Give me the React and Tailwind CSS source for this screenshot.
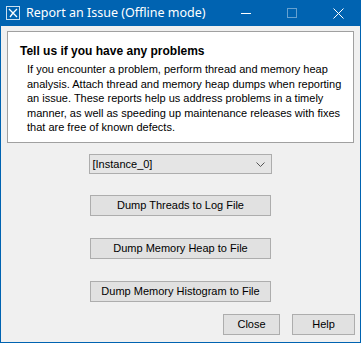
import React from 'react';

const font = { fontFamily: '"Liberation Sans", Arial, sans-serif' };

const WinButton = ({ children, className = '' }) => (
  <button className={`h-[21px] border border-[#adadad] bg-[#e1e1e1] text-[11px] text-black leading-none ${className}`}>
    {children}
  </button>
);

const App = () => {
  return (
    <div className="w-[361px] h-[343px] flex flex-col bg-[#0063b1] overflow-hidden" style={font}>
      {/* title bar */}
      <div className="h-[26px] flex items-center text-white shrink-0">
        <div className="ml-[6px] w-[14px] h-[14px] border border-white/80 flex items-center justify-center">
          <svg width="12" height="12" viewBox="0 0 12 12">
            <path d="M2 2 L10 10 M10 2 L6 6 M3 10 L6 6" stroke="white" strokeWidth="1.3" fill="none" />
          </svg>
        </div>
        <span className="ml-[6px] text-[12.5px]" style={{ fontFamily: '"Noto Sans", "Open Sans", sans-serif' }}>
          Report an Issue (Offline mode)
        </span>
        <div className="ml-auto flex items-center">
          <div className="w-[46px] h-[26px] flex items-center justify-center">
            <div className="w-[10px] h-px bg-white" />
          </div>
          <div className="w-[46px] h-[26px] flex items-center justify-center">
            <div className="w-[10px] h-[10px] border border-white/40" />
          </div>
          <div className="w-[46px] h-[26px] flex items-center justify-center">
            <svg width="11" height="11" viewBox="0 0 11 11">
              <path d="M0.5 0.5 L10.5 10.5 M10.5 0.5 L0.5 10.5" stroke="white" strokeWidth="1" />
            </svg>
          </div>
        </div>
      </div>

      {/* body */}
      <div className="flex-1 mx-px mb-px bg-[#f0f0f0] flex flex-col">
        <div className="mt-[5px] ml-[6px] mr-[6px] h-[112px] bg-white border border-[#a0a0a0] text-black">
          <div className="pl-[12px] pt-[12px] text-[12px] font-bold leading-[14px]">Tell us if you have any problems</div>
          <p className="pl-[19px] pr-[4px] pt-[4px] text-[11px] leading-[14.6px]">
            If you encounter a problem, perform thread and memory heap analysis. Attach thread and memory heap dumps when reporting an issue. These reports help us address problems in a timely manner, as well as speeding up maintenance releases with fixes that are free of known defects.
          </p>
        </div>

        <div className="mt-[11px] flex flex-col items-center">
          <div className="ml-[-1px] w-[183px] h-[20px] border border-[#adadad] bg-[#e5e5e5] flex items-center justify-between px-[3px] text-[11px]">
            <span>[Instance_0]</span>
            <svg width="9" height="5" viewBox="0 0 9 5" className="mr-[3px]">
              <path d="M0.5 0.5 L4.5 4.5 L8.5 0.5" stroke="#555" fill="none" />
            </svg>
          </div>
          <WinButton className="mt-[21px] w-[181px]">Dump Threads to Log File</WinButton>
          <WinButton className="mt-[22px] w-[181px]">Dump Memory Heap to File</WinButton>
          <WinButton className="mt-[22px] w-[181px]">Dump Memory Histogram to File</WinButton>
        </div>

        <div className="mt-[12px] flex justify-end pr-[5px] gap-[12px]">
          <WinButton className="w-[57px]">Close</WinButton>
          <WinButton className="w-[63px]">Help</WinButton>
        </div>
      </div>
    </div>
  );
};

export default App;
